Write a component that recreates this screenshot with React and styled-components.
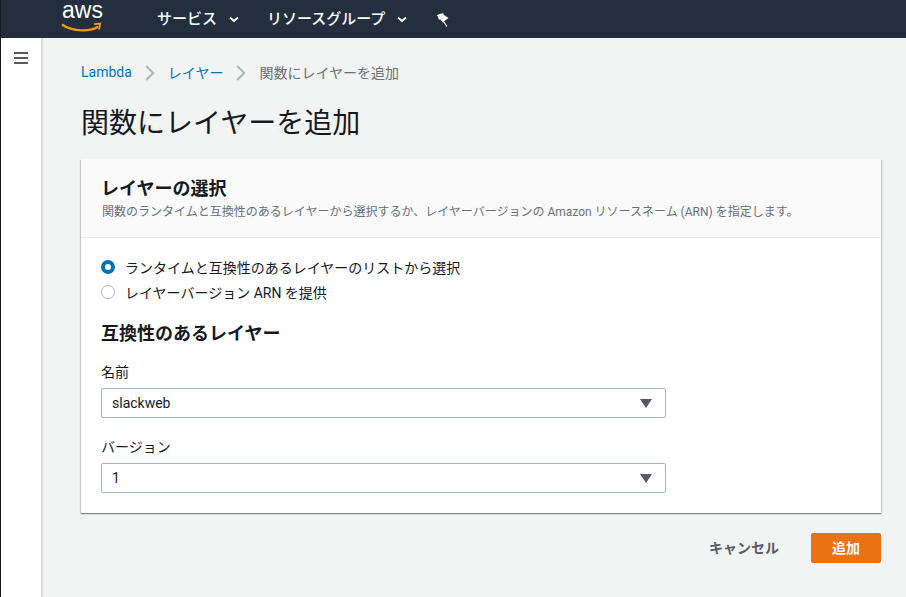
import React from 'react';
import styled, { createGlobalStyle } from 'styled-components';

const GlobalStyle = createGlobalStyle`
  html, body {
    margin: 0;
    padding: 0;
    height: 100%;
    overflow: hidden;
    background: #f2f3f3;
    font-family: Roboto, "Noto Sans CJK JP", sans-serif;
    color: #16191f;
  }
`;

const Page = styled.div`
  width: 906px;
  height: 597px;
  display: flex;
  flex-direction: column;
  border-left: 1px solid #1a1a24;
  box-sizing: border-box;
`;

const TopBar = styled.header`
  height: 38px;
  flex: none;
  background: #232f3e;
  display: flex;
  align-items: center;
  color: #fff;
  padding-left: 60px;
`;

const Logo = styled.svg`
  display: block;
  margin-right: 54px;
  margin-top: -2px;
`;

const NavItem = styled.div`
  display: flex;
  align-items: center;
  font-size: 15px;
  font-weight: 500;
  margin-right: ${({ $gap }) => $gap}px;
  margin-top: -4px;
`;

const Caret = styled.svg`
  margin-left: 12px;
  margin-top: 4px;
`;

const Pin = styled.svg`
  display: block;
`;

const Body = styled.div`
  flex: 1;
  display: flex;
  min-height: 0;
`;

const SideBar = styled.aside`
  flex: none;
  background: #fff;
  border-right: 1px solid #d5dbdb;
  box-shadow: 1px 0 1px rgba(0, 28, 36, 0.08);
  padding: 14px 0 0 13px;
  width: 27px;
`;

const Burger = styled.svg`
  display: block;
`;

const Main = styled.main`
  flex: 1;
  padding: 24px 25px 0 39px;
  min-width: 0;
`;

const Crumbs = styled.nav`
  display: flex;
  align-items: center;
  height: 20px;
  font-size: 14px;
  color: #687078;
`;

const CrumbLink = styled.a`
  color: #0073bb;
  text-decoration: none;
`;

const CrumbSep = styled.svg`
  margin: 2px 13px 0;
`;

const Title = styled.h1`
  margin: 22px 0 0;
  height: 40px;
  font-size: 28px;
  line-height: 40px;
  font-weight: 400;
  color: #16191f;
`;

const Card = styled.section`
  margin-top: 15px;
  background: #fff;
  height: 354px;
  box-shadow: 0 1px 1px 0 rgba(0, 28, 36, 0.3), 1px 1px 1px 0 rgba(0, 28, 36, 0.15), -1px 1px 1px 0 rgba(0, 28, 36, 0.15);
`;

const CardHead = styled.div`
  height: 79px;
  box-sizing: border-box;
  background: #fafafa;
  border-bottom: 1px solid #eaeded;
  padding: 18px 20px 0 21px;
`;

const CardTitle = styled.h2`
  margin: 0 0 0 -1px;
  line-height: 24px;
  font-weight: 700;
  font-size: 18px;
`;

const CardDesc = styled.p`
  margin: 0;
  font-size: 12px;
  line-height: 22px;
  color: #687078;
`;

const CardBody = styled.div`
  padding: 16px 20px 0 20px;
`;

const RadioRow = styled.label`
  display: flex;
  align-items: center;
  height: 25px;
  font-size: 14px;
  color: #16191f;
`;

const RadioDot = styled.span`
  width: 14px;
  height: 14px;
  box-sizing: border-box;
  border-radius: 50%;
  flex: none;
  margin-right: 10px;
  background: #fff;
  border: ${({ $on }) => ($on ? '4px solid #0073bb' : '1px solid #aab7b8')};
`;

const SubTitle = styled.h3`
  margin: 17px 0 0;
  font-size: 18px;
  line-height: 26px;
  font-weight: 700;
`;

const Field = styled.div`
  margin-top: ${({ $top }) => $top}px;
`;

const FieldLabel = styled.div`
  font-size: 14px;
  line-height: 20px;
  color: #16191f;
  margin-bottom: 6px;
`;

const Select = styled.div`
  width: 565px;
  height: 30px;
  box-sizing: border-box;
  background: #fff;
  border: 1px solid #aab7b8;
  border-radius: 2px;
  display: flex;
  align-items: center;
  justify-content: space-between;
  padding: 0 13px 0 10px;
  font-size: 14px;
`;

const Footer = styled.div`
  margin-top: 20px;
  display: flex;
  justify-content: flex-end;
  align-items: center;
`;

const CancelBtn = styled.button`
  border: 0;
  background: none;
  padding: 0 0 2px;
  font: inherit;
  font-size: 14px;
  font-weight: 700;
  color: #545b64;
  margin-right: 32px;
`;

const AddBtn = styled.button`
  width: 70px;
  height: 30px;
  border: 0;
  border-radius: 2px;
  padding: 0 0 2px;
  background: #ec7211;
  color: #fff;
  font: inherit;
  font-size: 14px;
  font-weight: 700;
`;

const Triangle = () => (
  <svg width="12" height="9" viewBox="0 0 12 9">
    <path d="M0 0h12L6 9z" fill="#545b64" />
  </svg>
);

const Chevron = () => (
  <Caret width="10" height="7" viewBox="0 0 10 7">
    <path d="M1 1.5l4 3.5 4-3.5" fill="none" stroke="#fff" strokeWidth="1.8" />
  </Caret>
);

const Sep = () => (
  <CrumbSep width="10" height="16" viewBox="0 0 10 16">
    <path d="M1.2 1l7 7-7 7" fill="none" stroke="#aab7b8" strokeWidth="2" />
  </CrumbSep>
);

export default function App() {
  return (
    <>
      <GlobalStyle />
      <Page>
        <TopBar>
          <Logo width="42" height="32" viewBox="0 0 42 32">
            <text x="1" y="16" fontFamily="Liberation Sans, sans-serif" fontSize="23" fill="#fff">aws</text>
            <path d="M1 22.5C10 29 28 30.5 37 24.8" fill="none" stroke="#f90" strokeWidth="2.2" />
            <path d="M33 22.2l6.2-.7-1.2 6" fill="none" stroke="#f90" strokeWidth="1.8" />
          </Logo>
          <NavItem $gap={28}>サービス<Chevron /></NavItem>
          <NavItem $gap={29}>リソースグループ<Chevron /></NavItem>
          <Pin width="14" height="15" viewBox="0 0 14 15">
            <path d="M1 3L7 1 8 3 12.5 6 8.5 9 7 10.5 4.5 7.5 3 7.5z" fill="#fff" />
            <path d="M7.5 9.5L11 14.5" stroke="#fff" strokeWidth="1.3" />
          </Pin>
        </TopBar>
        <Body>
          <SideBar>
            <Burger width="14" height="12" viewBox="0 0 14 12">
              <path d="M0 1h14M0 6h14M0 11h14" stroke="#545b64" strokeWidth="2" />
            </Burger>
          </SideBar>
          <Main>
            <Crumbs>
              <CrumbLink>Lambda</CrumbLink>
              <Sep />
              <CrumbLink>レイヤー</CrumbLink>
              <Sep />
              <span>関数にレイヤーを追加</span>
            </Crumbs>
            <Title>関数にレイヤーを追加</Title>
            <Card>
              <CardHead>
                <CardTitle>レイヤーの選択</CardTitle>
                <CardDesc>関数のランタイムと互換性のあるレイヤーから選択するか、レイヤーバージョンの Amazon リソースネーム (ARN) を指定します。</CardDesc>
              </CardHead>
              <CardBody>
                <RadioRow><RadioDot $on />ランタイムと互換性のあるレイヤーのリストから選択</RadioRow>
                <RadioRow><RadioDot />レイヤーバージョン ARN を提供</RadioRow>
                <SubTitle>互換性のあるレイヤー</SubTitle>
                <Field $top={15}>
                  <FieldLabel>名前</FieldLabel>
                  <Select>slackweb<Triangle /></Select>
                </Field>
                <Field $top={19}>
                  <FieldLabel>バージョン</FieldLabel>
                  <Select>1<Triangle /></Select>
                </Field>
              </CardBody>
            </Card>
            <Footer>
              <CancelBtn>キャンセル</CancelBtn>
              <AddBtn>追加</AddBtn>
            </Footer>
          </Main>
        </Body>
      </Page>
    </>
  );
}
